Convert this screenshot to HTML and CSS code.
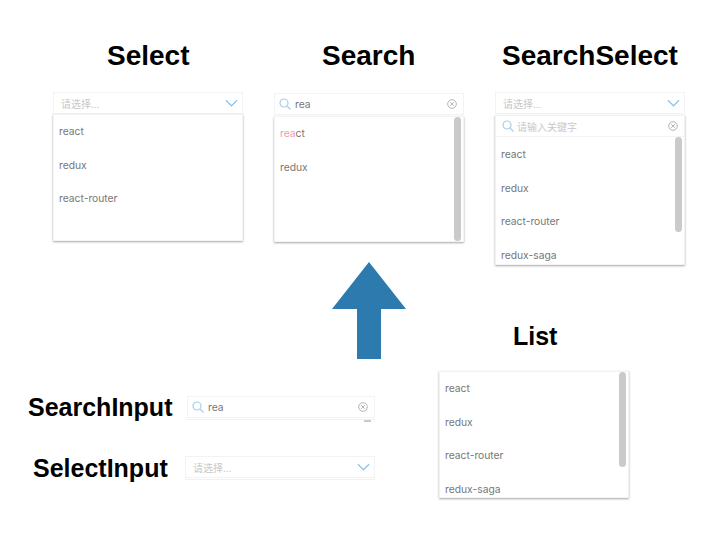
FILE: index.html
```html
<!DOCTYPE html>
<html lang="en">
<head>
  <meta charset="UTF-8">
  <title>Select components</title>
  <link rel="stylesheet" href="styles.css">
</head>
<body>
  <div class="canvas">

    <!-- Select -->
    <h2 class="title title-select">Select</h2>
    <div class="widget widget-select">
      <div class="field field-select">
        <span class="placeholder">请选择...</span>
        <svg class="chevron" viewBox="0 0 14 8"><path d="M1 1l6 6 6-6"/></svg>
      </div>
      <ul class="menu menu-select">
        <li>react</li>
        <li>redux</li>
        <li>react-router</li>
      </ul>
    </div>

    <!-- Search -->
    <h2 class="title title-search">Search</h2>
    <div class="widget widget-search">
      <div class="field field-search">
        <svg class="search-icon" viewBox="0 0 12 12"><circle cx="5" cy="5" r="4"/><path d="M8 8l3.500 3.500"/></svg>
        <span class="value">rea</span>
        <svg class="clear-icon" viewBox="0 0 10 10"><circle cx="5" cy="5" r="4.300"/><path d="M3.200 3.200l3.600 3.600M6.800 3.200l-3.600 3.600"/></svg>
      </div>
      <div class="menu menu-search">
        <ul>
          <li><span class="match">rea</span>ct</li>
          <li>redux</li>
        </ul>
        <div class="scroll-thumb thumb-search"></div>
      </div>
    </div>

    <!-- SearchSelect -->
    <h2 class="title title-searchselect">SearchSelect</h2>
    <div class="widget widget-searchselect">
      <div class="field field-select">
        <span class="placeholder">请选择...</span>
        <svg class="chevron" viewBox="0 0 14 8"><path d="M1 1l6 6 6-6"/></svg>
      </div>
      <div class="menu menu-searchselect">
        <div class="field field-inner">
          <svg class="search-icon" viewBox="0 0 12 12"><circle cx="5" cy="5" r="4"/><path d="M8 8l3.500 3.500"/></svg>
          <span class="placeholder">请输入关键字</span>
          <svg class="clear-icon" viewBox="0 0 10 10"><circle cx="5" cy="5" r="4.300"/><path d="M3.200 3.200l3.600 3.600M6.800 3.200l-3.600 3.600"/></svg>
        </div>
        <div class="options">
          <ul>
            <li>react</li>
            <li>redux</li>
            <li>react-router</li>
            <li>redux-saga</li>
          </ul>
          <div class="scroll-thumb thumb-searchselect"></div>
        </div>
      </div>
    </div>

    <!-- arrow -->
    <svg class="arrow" viewBox="0 0 74 97"><path d="M37 0l37 47H49v50H25V47H0z"/></svg>

    <!-- List -->
    <h2 class="title title-small title-list">List</h2>
    <div class="widget menu widget-list">
      <ul>
        <li>react</li>
        <li>redux</li>
        <li>react-router</li>
        <li>redux-saga</li>
      </ul>
      <div class="scroll-thumb thumb-list"></div>
    </div>

    <!-- SearchInput -->
    <h2 class="title title-small title-searchinput">SearchInput</h2>
    <div class="widget widget-searchinput">
      <div class="field field-search">
        <svg class="search-icon" viewBox="0 0 12 12"><circle cx="5" cy="5" r="4"/><path d="M8 8l3.500 3.500"/></svg>
        <span class="value">rea</span>
        <svg class="clear-icon" viewBox="0 0 10 10"><circle cx="5" cy="5" r="4.300"/><path d="M3.200 3.200l3.600 3.600M6.800 3.200l-3.600 3.600"/></svg>
      </div>
      <div class="menu-stub">
        <div class="stub-thumb"></div>
      </div>
    </div>

    <!-- SelectInput -->
    <h2 class="title title-small title-selectinput">SelectInput</h2>
    <div class="widget widget-selectinput">
      <div class="field field-select">
        <span class="placeholder">请选择...</span>
        <svg class="chevron" viewBox="0 0 14 8"><path d="M1 1l6 6 6-6"/></svg>
      </div>
      <div class="menu-stub"></div>
    </div>

  </div>
</body>
</html>
```

FILE: styles.css
```css
body {
  margin: 0;
  background: #fff;
  font-family: "Liberation Sans", Arial, sans-serif;
}
ul {
  margin: 0;
  padding: 0;
  list-style: none;
}

/* the picture is a free canvas, everything hangs off it */
.canvas {
  position: relative;
  width: 720px;
  height: 540px;
  overflow: hidden;
}
.title {
  position: absolute;
  margin: 0;
  font-size: 28px;
  line-height: 32px;
  font-weight: bold;
  color: #000;
  white-space: nowrap;
}
.title-small {
  font-size: 25px;
  line-height: 30px;
}
.title-select { left: 107px; top: 40px; }
.title-search { left: 322px; top: 40px; }
.title-searchselect { left: 502px; top: 40px; }
.title-list { left: 513px; top: 321px; }
.title-searchinput { left: 28px; top: 392px; }
.title-selectinput { left: 33px; top: 453px; }

.widget {
  position: absolute;
  width: 190px;
  font-family: Inter, "Noto Sans CJK SC", sans-serif;
}
.widget-select { left: 53px; top: 92px; }
.widget-search { left: 274px; top: 93px; }
.widget-searchselect { left: 495px; top: 92px; }
.widget-list { left: 439px; top: 371px; height: 127px; }
.widget-searchinput { left: 187px; top: 396px; width: 188px; }
.widget-selectinput { left: 185px; top: 456px; }

.field {
  display: flex;
  align-items: center;
  box-sizing: border-box;
  height: 22px;
  background: #fff;
  border: 1px solid #f3f3f3;
}
.field-select {
  padding: 0 4px 0 7px;
}
.field-search {
  padding: 0 6px 0 4px;
  gap: 4px;
}
.field-inner {
  height: 21px;
  border-width: 0 0 1px;
  padding: 0 6px;
  gap: 3px;
}
.placeholder {
  flex: 1;
  font-size: 10px;
  color: #c8c8c8;
  font-family: "Noto Sans CJK SC", sans-serif;
}
.value {
  flex: 1;
  font-size: 10.300px;
  color: #777;
}
.chevron {
  width: 13px;
  height: 8px;
  fill: none;
  stroke: #8cc4e8;
  stroke-width: 1.300;
}
.search-icon {
  width: 12px;
  height: 12px;
  fill: none;
  stroke: #a6d0ea;
  stroke-width: 1.200;
}
.clear-icon {
  width: 10px;
  height: 10px;
  fill: none;
  stroke: #aaa;
  stroke-width: 0.900;
}

.menu {
  position: relative;
  box-sizing: border-box;
  background: #fff;
  overflow: hidden;
  border: 1px solid #f3f3f3;
  box-shadow: 0 1px 2px rgba(0, 0, 0, 0.35);
}
.menu li {
  height: 33.700px;
  line-height: 33px;
  padding-left: 5px;
  font-size: 10.300px;
  color: #777;
}
.menu-select { height: 127px; }
.menu-search { height: 126px; margin-top: 1px; }
.menu-searchselect { height: 150px; margin-top: 1px; }
.options {
  position: relative;
  padding-top: 1px;
}
.match {
  color: #ee9db0;
}
.scroll-thumb {
  position: absolute;
  top: 0;
  right: 2px;
  width: 7px;
  border-radius: 4px;
  background: #cacaca;
}
.thumb-search { height: 124px; }
.thumb-searchselect { height: 95px; }
.thumb-list { height: 95px; }

/* the clipped top edge of the menu under the two inputs */
.menu-stub {
  position: relative;
  height: 2px;
  margin-top: 1px;
  overflow: hidden;
  border-top: 1px solid #f0f0f0;
}
.stub-thumb {
  position: absolute;
  top: 0;
  right: 4px;
  width: 7px;
  height: 3px;
  background: #cacaca;
}

.arrow {
  position: absolute;
  left: 332px;
  top: 262px;
  width: 74px;
  height: 97px;
  fill: #2d7bae;
}
```
